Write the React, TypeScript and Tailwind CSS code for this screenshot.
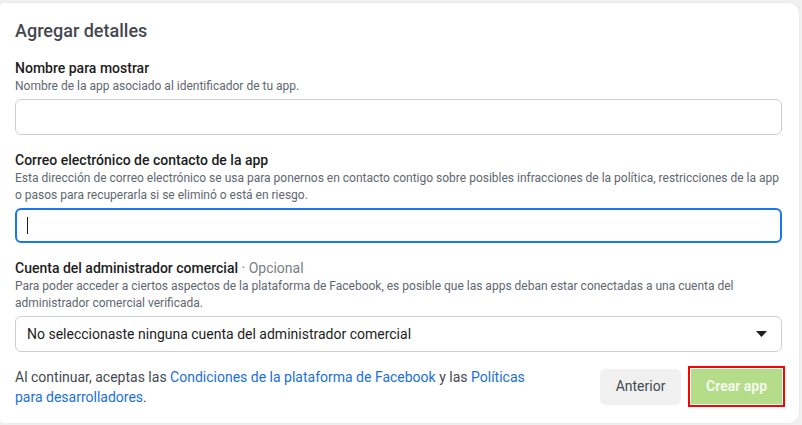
export default function App() {
  return (
    <div className="min-h-screen w-[802px] h-[425px] bg-[#f0f0f0] pt-[3px] pr-[3px] font-['Roboto','Liberation_Sans',sans-serif]">
      <div className="h-[420px] w-[799px] rounded-r-[10px] rounded-l-[4px] bg-white pl-[15px] pr-[16px] pt-[17px] shadow-[0_0_2px_rgba(0,0,0,0.08)]">
        <h2 className="text-[18px] leading-[22px] font-medium text-[#444950]">Agregar detalles</h2>

        <div className="mt-[17px]">
          <div className="text-[14px] leading-[18px] font-medium text-[#1c1e21]">Nombre para mostrar</div>
          <div className="mt-px text-[12px] leading-[16px] text-[#606770]">
            Nombre de la app asociado al identificador de tu app.
          </div>
          <input
            type="text"
            className="mt-[5px] block h-[36px] w-[767px] rounded-[6px] border border-[#ccd0d5] bg-white px-3 outline-none"
          />
        </div>

        <div className="mt-[16px]">
          <div className="text-[14px] leading-[18px] font-medium text-[#1c1e21]">
            Correo electrónico de contacto de la app
          </div>
          <div className="mt-px text-[12px] leading-[17px] text-[#606770]">
            Esta dirección de correo electrónico se usa para ponernos en contacto contigo sobre posibles infracciones de la
            política, restricciones de la app o pasos para recuperarla si se eliminó o está en riesgo.
          </div>
          <div className="mt-[4px] flex h-[35px] w-[767px] items-center rounded-[6px] border-2 border-[#1877f2] bg-white pl-[10px]">
            <span className="h-[17px] w-px bg-[#1c1e21]" />
          </div>
        </div>

        <div className="mt-[16px]">
          <div className="text-[14px] leading-[18px] font-medium text-[#1c1e21]">
            Cuenta del administrador comercial <span className="font-normal text-[#7a7e85]">· Opcional</span>
          </div>
          <div className="mt-px text-[12px] leading-[17px] text-[#606770]">
            Para poder acceder a ciertos aspectos de la plataforma de Facebook, es posible que las apps deban estar conectadas a
            una cuenta del administrador comercial verificada.
          </div>
          <div className="mt-[4px] flex h-[36px] w-[767px] items-center justify-between rounded-[6px] border border-[#ccd0d5] bg-white pl-[11px] pr-[14px]">
            <span className="text-[14px] text-[#1c1e21]">No seleccionaste ninguna cuenta del administrador comercial</span>
            <svg width="11" height="6" viewBox="0 0 11 6">
              <path d="M0 0h11L5.5 6z" fill="#1c1e21" />
            </svg>
          </div>
        </div>

        <div className="mt-[14px] flex w-[770px] items-center justify-between">
          <p className="w-[530px] text-[14px] leading-[20px] text-[#444950]">
            Al continuar, aceptas las <span className="text-[#216fdb]">Condiciones de la plataforma de Facebook</span> y las{" "}
            <span className="text-[#216fdb]">Políticas para desarrolladores</span>.
          </p>
          <div className="flex items-center gap-[7px]">
            <button className="h-[36px] w-[81px] rounded-[6px] bg-[#f0f0f0] text-[14px] text-[#444950]">Anterior</button>
            <div className="border-[2px] border-[#ff0000] p-px">
              <button className="block h-[35px] w-[91px] bg-[#b4dc89] text-[14px] font-bold text-[#f2f9ec]">
                Crear app
              </button>
            </div>
          </div>
        </div>
      </div>
    </div>
  );
}
